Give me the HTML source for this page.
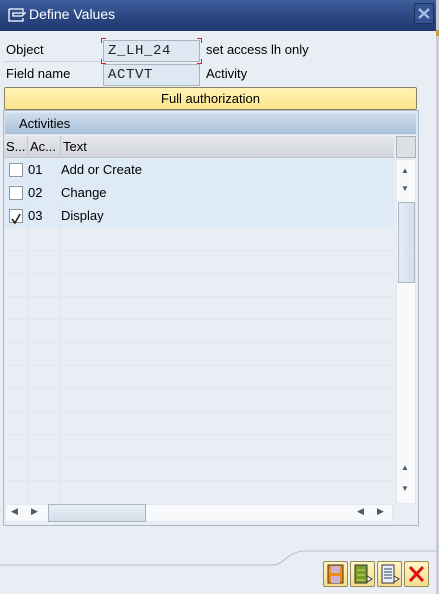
<!DOCTYPE html>
<html><head><style>
*{margin:0;padding:0;box-sizing:border-box}
body{width:439px;height:594px;overflow:hidden;background:#e9eef5;font-family:"Liberation Sans",sans-serif;font-size:13px;color:#000;position:relative}
.a{position:absolute}
.title{left:0;top:0;width:436px;height:31px;background:linear-gradient(#3d5f9c,#2a4580 60%,#22396f);color:#fff;font-size:14px}
.inp{background:#dde8f3;border:1px solid #a9b4c0;font-family:"Liberation Mono",monospace;font-size:14px;padding:2px 0 0 4px;letter-spacing:0.6px;color:#222}
.row{left:6px;width:388px;height:23px;line-height:22px;border-bottom:1px solid #e0e7ef}
.cb{left:3px;top:4px;width:14px;height:14px;border:1px solid #8f98a3;background:#fff}
.vl{top:159px;width:1px;height:345px;background:#dfe6ee}
.btn{top:561px;width:25px;height:26px;border:1px solid #9b8a55;border-radius:2px;background:linear-gradient(#fff6c8,#f3dd8c)}
.sb{background:#f7f9fb;border:1px solid #e3e8ee}
.rc{position:absolute;width:5px;height:5px;border-color:#e02020;border-style:solid;border-width:0}
</style></head><body>
<div class="a title">
 <svg class="a" style="left:8px;top:8px" width="18" height="14"><path d="M1 1h14v3M1 1v12h14v-3M5 5h12l-3 3h-9z" fill="none" stroke="#fff" stroke-width="1.3"/></svg>
 <div class="a" style="left:29px;top:6px">Define Values</div>
 <div class="a" style="left:414px;top:3px;width:20px;height:21px;border:1px solid #1c2e5c;background:#34548f;border-radius:2px"><svg width="18" height="19"><path d="M4 5L14 14M14 5L4 14" stroke="#a9c3ee" stroke-width="2.2"/></svg></div>
</div>
<div class="a" style="left:436px;top:0;width:3px;height:594px;background:#c9ccd1"></div>
<div class="a" style="left:436px;top:30px;width:3px;height:6px;background:#c89a3a"></div>
<div class="a" style="left:6px;top:42px">Object</div>
<div class="a" style="left:4px;top:61px;width:96px;height:1px;background:#cdd5de"></div>
<div class="a inp" style="left:103px;top:40px;width:97px;height:22px">Z_LH_24</div>
<div class="rc" style="left:101px;top:38px;border-top-width:1px;border-left-width:1px"></div>
<div class="rc" style="left:197px;top:38px;border-top-width:1px;border-right-width:1px"></div>
<div class="rc" style="left:101px;top:59px;border-bottom-width:1px;border-left-width:1px"></div>
<div class="rc" style="left:197px;top:59px;border-bottom-width:1px;border-right-width:1px"></div>
<div class="a" style="left:206px;top:42px">set access lh only</div>
<div class="a" style="left:6px;top:66px">Field name</div>
<div class="a inp" style="left:103px;top:64px;width:97px;height:22px">ACTVT</div>
<div class="a" style="left:206px;top:66px">Activity</div>
<div class="a" style="left:4px;top:87px;width:413px;height:23px;border:1px solid #8a8465;border-radius:2px;background:linear-gradient(#fff3b5,#fbe58a);text-align:center;line-height:21px">Full authorization</div>
<div class="a" style="left:3px;top:110px;width:416px;height:416px;border:1px solid #a6b7cb;background:#e9eef5"></div>
<div class="a" style="left:4px;top:112px;width:413px;height:23px;background:linear-gradient(#cfdded,#a9c0d9);border:1px solid #dbe5f0;padding-left:14px;line-height:21px">Activities</div>
<div class="a" style="left:4px;top:136px;width:390px;height:22px;background:linear-gradient(#e4e6ea,#d3d6db);border-bottom:1px solid #b9c3ce"></div>
<div class="a" style="left:6px;top:139px">S...</div>
<div class="a" style="left:27px;top:136px;width:1px;height:22px;background:#c3c9d1"></div>
<div class="a" style="left:30px;top:139px">Ac...</div>
<div class="a" style="left:60px;top:136px;width:1px;height:22px;background:#c3c9d1"></div>
<div class="a" style="left:63px;top:139px">Text</div>
<div class="a" style="left:4px;top:159px;width:390px;height:69px;background:#deeaf5"></div>
<div class="a vl" style="left:27px"></div><div class="a vl" style="left:60px"></div>
<div class="a row" style="top:159px"><div class="a cb"></div><span class="a" style="left:22px">01</span><span class="a" style="left:55px">Add or Create</span></div>
<div class="a row" style="top:182px"><div class="a cb"></div><span class="a" style="left:22px">02</span><span class="a" style="left:55px">Change</span></div>
<div class="a row" style="top:205px"><div class="a cb"><svg width="12" height="12"><path d="M2 6l3 4 5-9" fill="none" stroke="#222" stroke-width="1.6"/></svg></div><span class="a" style="left:22px">03</span><span class="a" style="left:55px">Display</span></div>
<div class="a row" style="top:228px"></div><div class="a row" style="top:251px"></div><div class="a row" style="top:274px"></div><div class="a row" style="top:297px"></div><div class="a row" style="top:320px"></div><div class="a row" style="top:343px"></div><div class="a row" style="top:366px"></div><div class="a row" style="top:389px"></div><div class="a row" style="top:412px"></div><div class="a row" style="top:435px"></div><div class="a row" style="top:458px"></div><div class="a row" style="top:481px;border:none"></div>
<div class="a" style="left:396px;top:136px;width:20px;height:22px;border:1px solid #a8b1bc;background:#dcdfe3"></div>
<div class="a sb" style="left:396px;top:159px;width:20px;height:345px"></div>
<div class="a" style="left:401px;top:166px;font-size:8px;color:#4f5966">▲</div>
<div class="a" style="left:401px;top:184px;font-size:8px;color:#4f5966">▼</div>
<div class="a" style="left:398px;top:202px;width:17px;height:81px;border:1px solid #a9b6c4;background:linear-gradient(90deg,#e6edf5,#d4dfea)"></div>
<div class="a" style="left:401px;top:463px;font-size:8px;color:#4f5966">▲</div>
<div class="a" style="left:401px;top:484px;font-size:8px;color:#4f5966">▼</div>
<div class="a sb" style="left:5px;top:504px;width:388px;height:18px"></div>
<div class="a" style="left:11px;top:506px;font-size:9px;color:#4f5966">◀</div>
<div class="a" style="left:31px;top:506px;font-size:9px;color:#4f5966">▶</div>
<div class="a" style="left:48px;top:504px;width:98px;height:18px;border:1px solid #a9b6c4;background:linear-gradient(#e9eff5,#d3dde8)"></div>
<div class="a" style="left:357px;top:506px;font-size:9px;color:#4f5966">◀</div>
<div class="a" style="left:377px;top:506px;font-size:9px;color:#4f5966">▶</div>
<svg class="a" style="left:0;top:548px" width="436" height="20"><path d="M0 17H272C285 17 287 3 305 3H436" fill="none" stroke="#b4bfcc" stroke-width="1"/></svg>
<div class="a btn" style="left:323px"><svg width="23" height="24"><rect x="4" y="3" width="15" height="18" fill="#f08a10" stroke="#333"/><rect x="7" y="4" width="9" height="7" fill="#c8b4d8"/><rect x="7" y="14" width="9" height="7" fill="#c8b4d8"/></svg></div>
<div class="a btn" style="left:350px"><svg width="23" height="24"><rect x="4" y="3" width="12" height="18" fill="#7a9a2a" stroke="#333"/><path d="M6 8h8M6 13h8M6 18h8" stroke="#c8e060"/><path d="M16 14l5 3-5 3z" fill="#fff" stroke="#333"/></svg></div>
<div class="a btn" style="left:377px"><svg width="23" height="24"><rect x="4" y="3" width="12" height="18" fill="#eef" stroke="#333"/><path d="M6 7h8M6 10h8M6 13h8M6 16h8" stroke="#8899aa" stroke-width="2"/><path d="M16 14l5 3-5 3z" fill="#fff" stroke="#333"/></svg></div>
<div class="a btn" style="left:404px"><svg width="23" height="24"><path d="M5 5L18 19M18 5L5 19" stroke="#e01010" stroke-width="3"/></svg></div>
</body></html>
